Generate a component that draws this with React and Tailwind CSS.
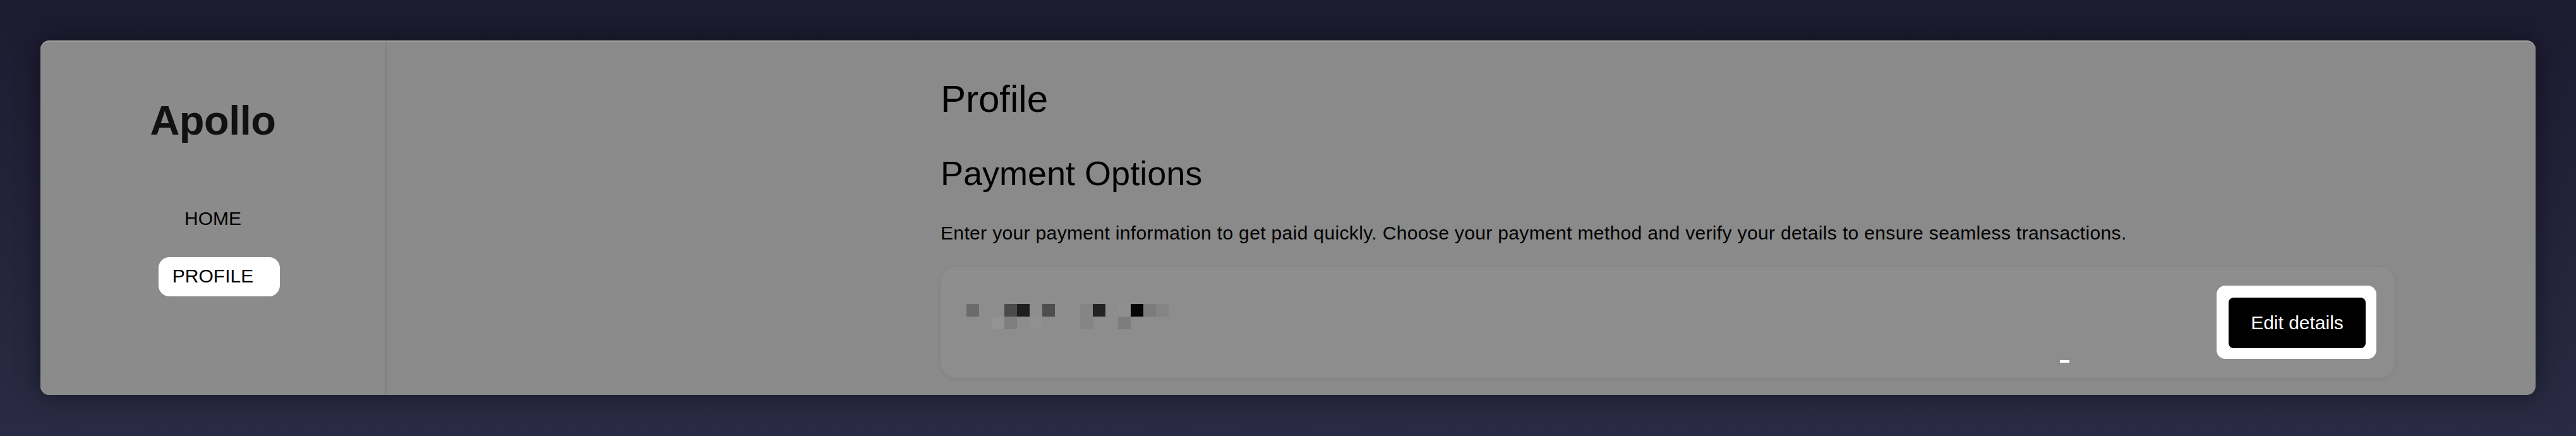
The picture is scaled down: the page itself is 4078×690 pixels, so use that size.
import React from "react";

const font = { fontFamily: '"Liberation Sans", Arial, sans-serif' };

// blurred account number, 20px squares: [col, row, colour]
const pixels = [
  [0, 0, "#6b6b6b"], [3, 0, "#4a4a4a"], [4, 0, "#1e1e1e"], [6, 0, "#4e4e4e"],
  [9, 0, "#858585"], [10, 0, "#232323"], [12, 0, "#8f8f8f"], [13, 0, "#050505"],
  [14, 0, "#7b7b7b"], [15, 0, "#848484"],
  [2, 1, "#939393"], [3, 1, "#7e7e7e"], [5, 1, "#909090"], [8, 1, "#8e8e8e"],
  [9, 1, "#858585"], [12, 1, "#7d7d7d"],
];

function Blurred() {
  return (
    <div className="grid grid-cols-[repeat(16,20px)] grid-rows-[20px_20px] mb-[18px]">
      {pixels.map(([c, r, color], i) => (
        <div
          key={i}
          className="w-[20px] h-[20px]"
          style={{ gridColumnStart: c + 1, gridRowStart: r + 1, backgroundColor: color }}
        />
      ))}
    </div>
  );
}

function Sidebar() {
  return (
    <aside className="w-[548px] shrink-0 border-r-2 border-[#7f7f7f] bg-[#8b8b8b] flex flex-col items-center pt-[92px]">
      <h1 className="text-[65px] leading-[65px] font-bold text-[#111] tracking-[-0.5px]">Apollo</h1>

      {/* Nav */}
      <nav className="flex flex-col items-center mt-[108px]">
        <a className="text-[30px] leading-[30px] text-black">HOME</a>
        <a className="mt-[46px] ml-[20px] bg-white rounded-[17px] pl-[22px] pr-[42px] pt-[15px] pb-[17px] text-[30px] leading-[30px] text-black">
          PROFILE
        </a>
      </nav>
    </aside>
  );
}

export default function App() {
  return (
    <div style={font} className="w-full h-[690px] bg-gradient-to-b from-[#1c1b30] to-[#2a2a44] p-16 pb-[65px]">
      <div className="h-full flex rounded-[14px] overflow-hidden border-t-2 border-[#a0a0a0] bg-[#8a8a8a] shadow-[0_0_40px_rgba(0,0,0,0.45)]">
        <Sidebar />

        <main className="flex-1 pl-[877px] pt-[61px] text-black">
          <h2 className="text-[60px] leading-[60px]">Profile</h2>
          <h3 className="mt-[60px] text-[54px] leading-[54px]">Payment Options</h3>
          <p className="mt-[53px] text-[30px] leading-[30px] tracking-[0.35px]">
            Enter your payment information to get paid quickly. Choose your payment method and verify your details to ensure seamless transactions.
          </p>

          {/* Payment card */}
          <div className="relative mt-[38px] w-[2302px] h-[176px] rounded-[24px] bg-[#8d8d8d] shadow-[0_2px_6px_rgba(0,0,0,0.08)] flex items-center justify-between pl-[41px] pr-[29px]">
            <Blurred />
            <div className="bg-white rounded-[14px] pl-[19px] pr-[17px] pt-[19px] pb-[17px]">
              <button className="w-[217px] h-[80px] rounded-[8px] bg-black text-white text-[30px] leading-[30px]">
                Edit details
              </button>
            </div>
            <span className="absolute left-[1772px] top-[148px] w-[15px] h-[4px] bg-white" />
          </div>
        </main>
      </div>
    </div>
  );
}
